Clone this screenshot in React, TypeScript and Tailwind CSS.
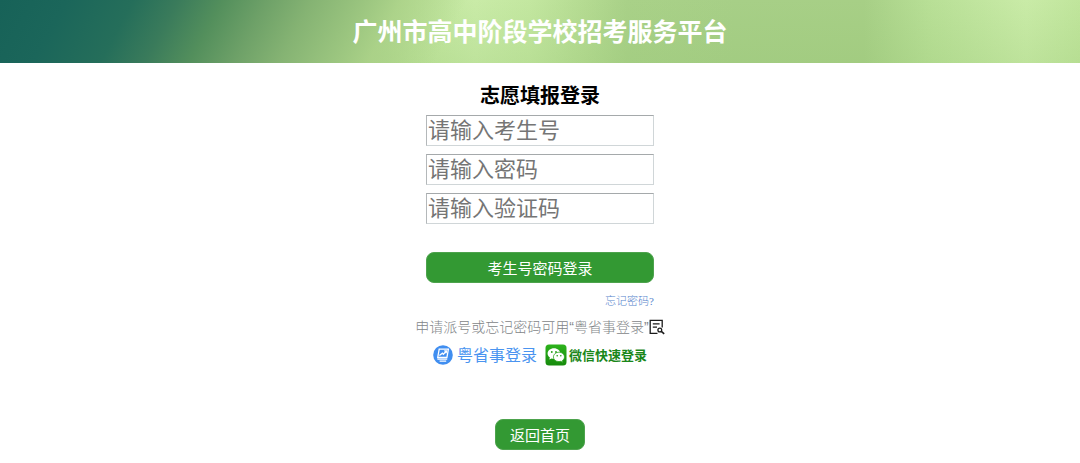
import { useState } from 'react';

type Field = {
    id: string;
    label: string;
    type: 'text' | 'password';
};

const fields: Field[] = [
    { id: 'examNo', label: '请输入考生号', type: 'text' },
    { id: 'password', label: '请输入密码', type: 'password' },
    { id: 'captcha', label: '请输入验证码', type: 'text' },
];

// ── Icons ──────────────────────────────────────────────────────────────────────

function YueIcon() {
    return (
        <svg viewBox="0 0 20 20" className="size-5 shrink-0" aria-hidden="true">
            <circle cx="10" cy="10" r="9.8" fill="#408ef0" />
            <g fill="none" stroke="#fff" strokeWidth="1.3">
                <path d="M6.2 4.2h9.2l-1.5 8.3H4.7z" />
                <path d="M6.4 10.4l3-2.2 1 1 3-3.2M11.2 5.9h2.3l-.4 2.2" />
                <path d="M4.4 14.1h9.8M6.6 16.2h6.6" />
            </g>
        </svg>
    );
}

function WechatIcon() {
    return (
        <svg viewBox="0 0 22 22" className="size-[22px] shrink-0" aria-hidden="true">
            <defs>
                <linearGradient id="wechat" x1="0" y1="0" x2="0" y2="1">
                    <stop offset="0" stopColor="#2db31c" />
                    <stop offset="1" stopColor="#168a0c" />
                </linearGradient>
            </defs>
            <rect x=".5" y=".5" width="21" height="21" rx="3.5" fill="url(#wechat)" />
            <path d="M9 4.3c-3.6 0-6.4 2.3-6.4 5.2 0 1.7.9 3.1 2.3 4.1l-.6 2 2.3-1.2c.8.2 1.6.3 2.4.3 3.5 0 6.3-2.3 6.3-5.2S12.5 4.3 9 4.3z" fill="#fff" />
            <path d="M14 8.2c-3.2 0-5.6 2.1-5.6 4.7s2.4 4.7 5.6 4.7c.7 0 1.3-.1 1.9-.3l1.9 1.1-.5-1.8c1.4-.9 2.2-2.2 2.2-3.7 0-2.6-2.5-4.7-5.5-4.7z" fill="#fff" stroke="#1f9d13" strokeWidth=".7" />
            <g fill="#1f9d13">
                <circle cx="6.8" cy="8" r=".9" />
                <circle cx="11" cy="8" r=".9" />
                <circle cx="12.2" cy="11.7" r=".8" />
                <circle cx="15.8" cy="11.7" r=".8" />
            </g>
        </svg>
    );
}

function GuideIcon() {
    return (
        <svg viewBox="0 0 16 16" className="size-4 shrink-0" fill="none" stroke="#1a1a1a" strokeWidth="1.3" aria-hidden="true">
            <path d="M8.5 14.3H1.2V1.4h12v7M3.8 4.9h6.8M3.8 8.2h4.2" />
            <circle cx="10.8" cy="11" r="1.9" />
            <path d="M12.3 12.4l2.9 2.5" strokeWidth="1.6" />
        </svg>
    );
}

// ── Page ───────────────────────────────────────────────────────────────────────

export default function App() {
    const [values, setValues] = useState<Record<string, string>>({});

    return (
        <div className="min-h-screen bg-white font-['Open_Sans','Noto_Sans_CJK_SC',sans-serif] text-black">
            <header className="bg-[linear-gradient(118deg,#176258_0%,#1b665a_6%,#256e5a_12%,#3a7b5b_16%,#538f5c_20%,#6ea168_24%,#85b373_28%,#97c27d_32%,#a9d087cc_36%,#b8dd9400_42%),linear-gradient(180deg,transparent,#8ebf6a30),linear-gradient(90deg,#a9d187_30%,#bfe49b_38%,#c9eba7_44%,#c3e7a0_49%,#b5db92_54%,#a9d188_58%,#a7cf87_68%,#a7cf86_80%,#b8df96_86%,#c9eba7_95%,#c0e59c_100%)] px-4 py-4 text-center">
                <h1 className="text-[25px] leading-[31px] font-bold text-white">广州市高中阶段学校招考服务平台</h1>
            </header>

            <main className="flex flex-col items-center pt-[18px] pb-3">
                <form className="flex w-57 flex-col" onSubmit={e => e.preventDefault()}>
                    <h2 className="mb-1 text-center text-xl leading-[30px] font-bold">志愿填报登录</h2>
                    <div className="flex flex-col gap-2">
                        {fields.map(field => (
                            <input
                                key={field.id}
                                id={field.id}
                                type={field.type}
                                aria-label={field.label}
                                placeholder={field.label}
                                value={values[field.id] ?? ''}
                                onChange={e => setValues(v => ({ ...v, [field.id]: e.target.value }))}
                                className="h-[31px] border border-t-[#a5a9ab] border-r-[#d0d6d8] border-b-[#d0d6d8] border-l-[#b4b8ba] px-px pb-1.5 font-['Noto_Sans_CJK_SC',sans-serif] text-[22px] leading-6 placeholder:text-[#757575]"
                            />
                        ))}
                    </div>
                    <button
                        type="submit"
                        className="mt-7 h-[31px] rounded-lg border border-[#4da34d] bg-[#339933] text-[15px] leading-7 text-white"
                    >
                        考生号密码登录
                    </button>
                    <a
                        href="#forgot"
                        className="mt-2.5 self-end font-['Liberation_Serif','Noto_Sans_CJK_SC',serif] text-[11px] leading-4 font-light text-[#5583cc]"
                    >
                        忘记密码?
                    </a>
                </form>

                <p className="mt-1.5 flex items-center font-['Liberation_Sans','Noto_Sans_CJK_SC',sans-serif] text-sm leading-6 font-light text-[#7f8588]">
                    <span>申请派号或忘记密码可用<q>粤省事登录</q></span>
                    <a href="#guide" aria-label="登录指引">
                        <GuideIcon />
                    </a>
                </p>

                <div className="mt-1 flex items-center gap-2">
                    <a href="#yss" className="flex items-center gap-1 text-base leading-6 text-[#4a94f0]">
                        <YueIcon />
                        粤省事登录
                    </a>
                    <a href="#wechat" className="flex items-center gap-0.5 text-[13px] leading-6 font-bold text-[#1a871a]">
                        <WechatIcon />
                        微信快速登录
                    </a>
                </div>

                <button
                    type="button"
                    className="mt-13 h-[31px] rounded-lg border border-[#4da34d] bg-[#339933] px-3.5 text-[15px] leading-7 text-white"
                >
                    返回首页
                </button>
            </main>
        </div>
    );
}
